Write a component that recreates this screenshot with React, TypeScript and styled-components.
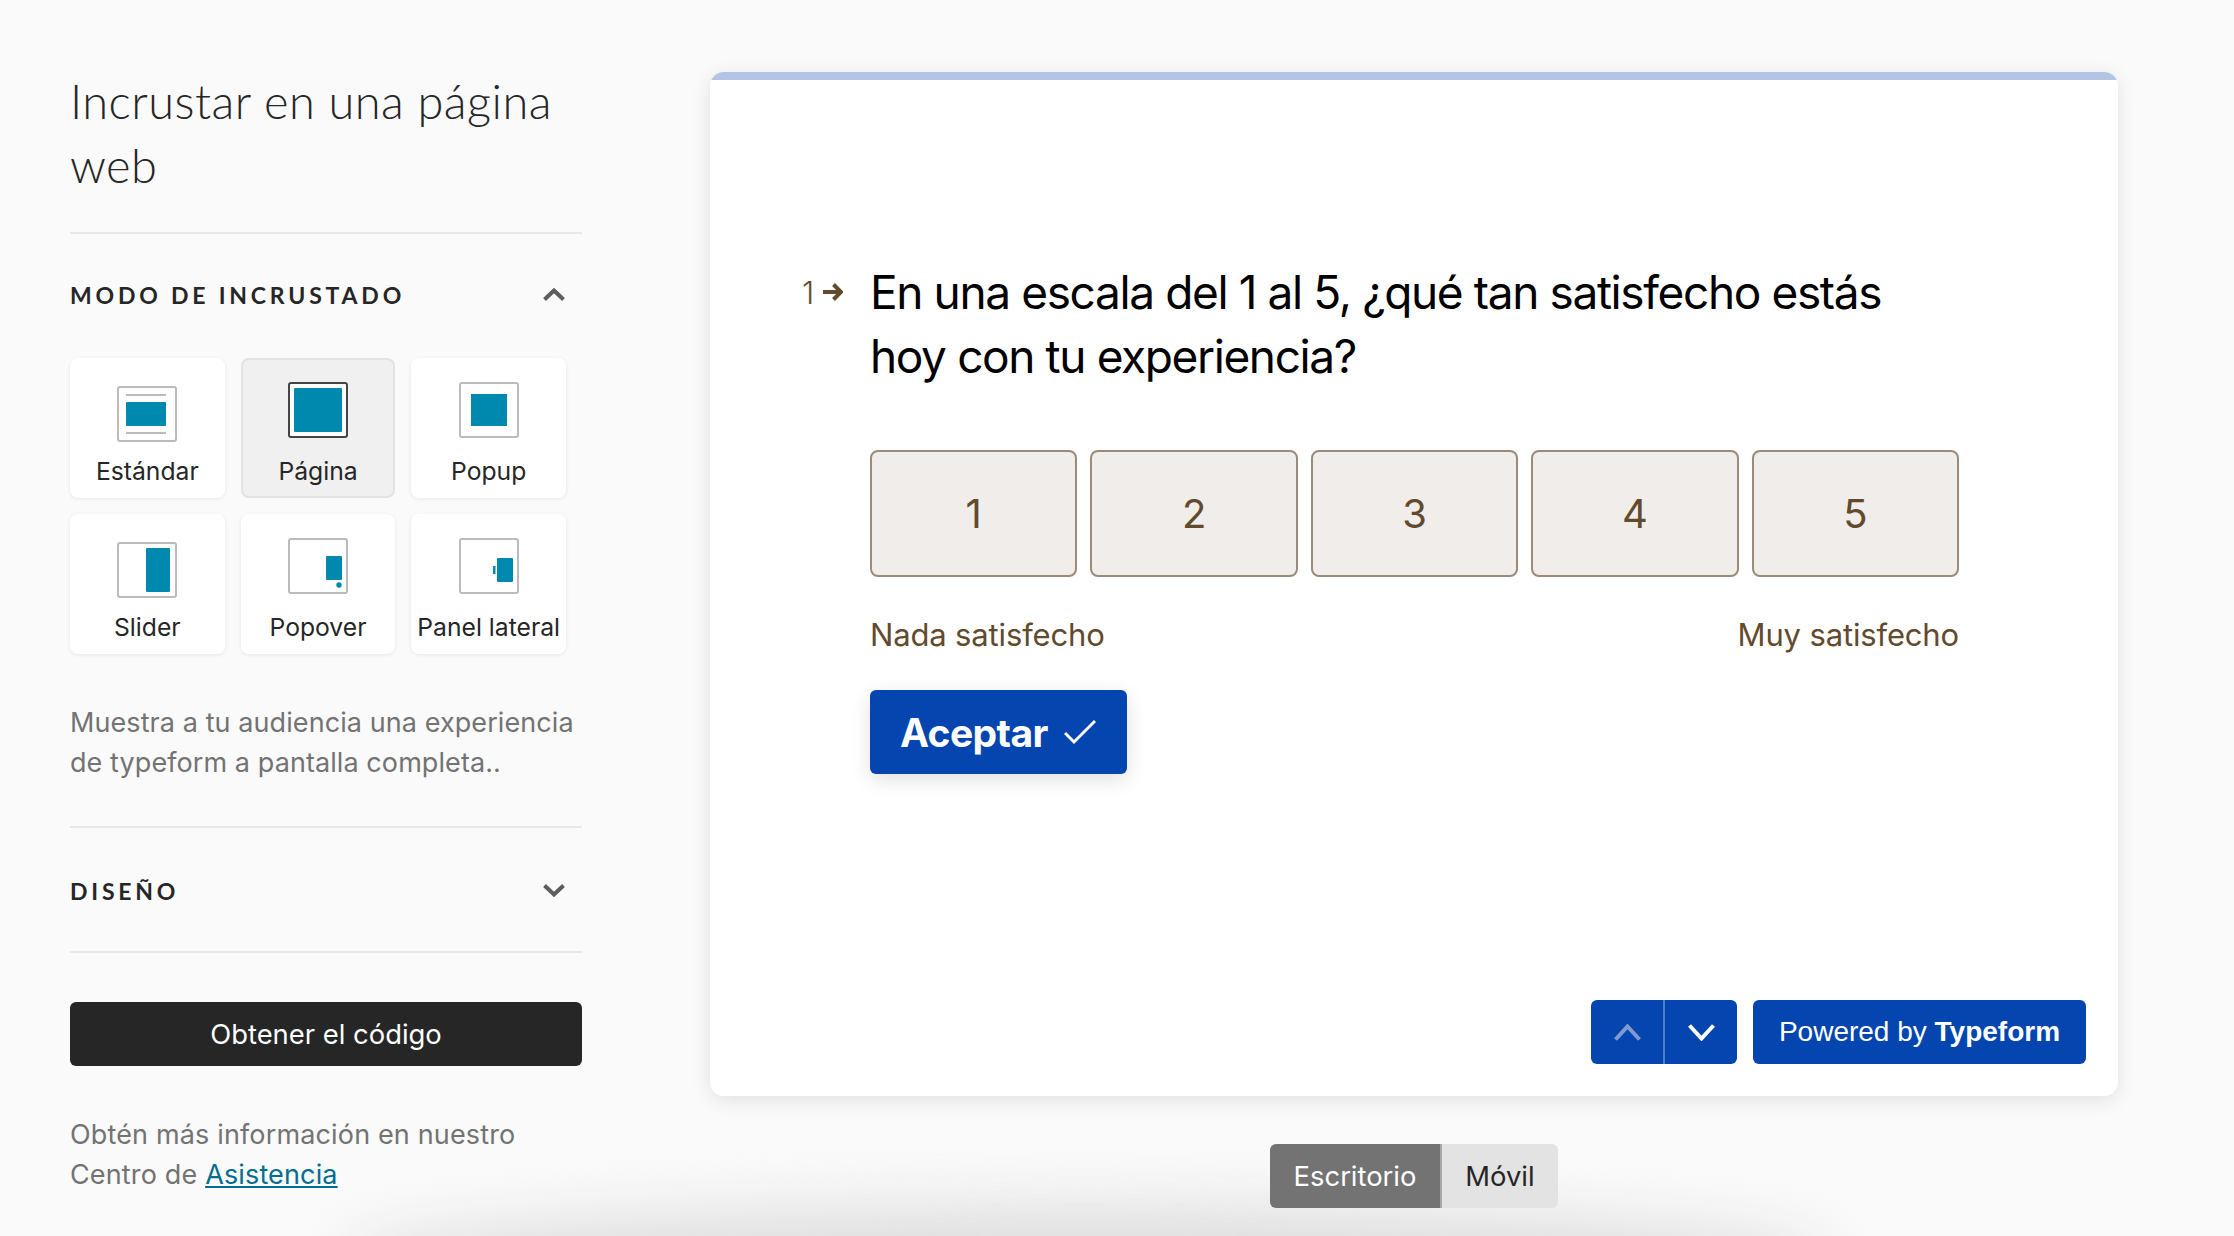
import React from 'react';
import styled, { createGlobalStyle } from 'styled-components';

const GlobalStyle = createGlobalStyle`
  html, body {
    margin: 0;
    padding: 0;
    background: #fafafa;
  }
  * {
    box-sizing: border-box;
  }
`;

const Page = styled.div`
  position: relative;
  width: 2234px;
  height: 1236px;
  overflow: hidden;
  display: flex;
  background: #fafafa;
  font-family: Inter, "Liberation Sans", sans-serif;
`;

const BottomGlow = styled.div`
  position: absolute;
  left: 340px;
  right: 400px;
  bottom: -80px;
  height: 110px;
  border-radius: 50%;
  background: #dedede;
  filter: blur(30px);
`;

const Sidebar = styled.aside`
  position: relative;
  width: 512px;
  margin-left: 70px;
  flex-shrink: 0;
`;

const Title = styled.h1`
  margin: 0;
  padding: 69px 0 35px;
  font-family: Lato, sans-serif;
  font-weight: 300;
  font-size: 47px;
  letter-spacing: 0.45px;
  line-height: 64px;
  color: #262627;
  border-bottom: 2px solid #e8e8e8;
`;

const SectionHead = styled.div<{ $ruled?: boolean }>`
  height: ${(p) => (p.$ruled ? '125px' : '124px')};
  display: flex;
  align-items: center;
  justify-content: space-between;
  padding: ${(p) => (p.$ruled ? '2px 17px 0 0' : '0 17px 3px 0')};
  border-bottom: ${(p) => (p.$ruled ? '2px solid #e8e8e8' : 'none')};
`;

const SectionTitle = styled.span`
  font-family: Lato, sans-serif;
  font-weight: 700;
  font-size: 23px;
  letter-spacing: 3.8px;
  color: #262627;
`;

const ModeGrid = styled.div`
  display: grid;
  width: 496px;
  grid-template-columns: repeat(3, 1fr);
  grid-auto-rows: 140px;
  gap: 16px;
`;

const ModeCard = styled.div<{ $active?: boolean }>`
  display: grid;
  grid-template-rows: 99px 1fr;
  justify-items: center;
  border-radius: 8px;
  background: ${(p) => (p.$active ? '#f0f0f0' : '#fff')};
  box-shadow: ${(p) => (p.$active ? 'inset 0 0 0 2px #e3e3e3' : '0 1px 4px rgba(0, 0, 0, 0.08)')};
`;

const ModeIcon = styled.svg<{ $top: number }>`
  width: 60px;
  height: 56px;
  margin-top: ${(p) => p.$top}px;
`;

const ModeLabel = styled.span`
  font-size: 24.7px;
  line-height: 28px;
  color: #262627;
  white-space: nowrap;
`;

const Description = styled.p`
  margin: 49px 0 0;
  padding-bottom: 43px;
  font-size: 27px;
  letter-spacing: 0.08px;
  line-height: 40px;
  color: #737373;
  border-bottom: 2px solid #e8e8e8;
`;

const CodeButton = styled.button`
  display: block;
  width: 512px;
  height: 64px;
  margin-top: 49px;
  border: none;
  border-radius: 6px;
  background: #262627;
  color: #fff;
  font-family: Inter, sans-serif;
  font-size: 27.4px;
`;

const HelpText = styled.p`
  margin: 49px 0 0;
  font-size: 27px;
  letter-spacing: 0.15px;
  line-height: 40px;
  color: #737373;
`;

const HelpLink = styled.a`
  color: #006e8f;
  text-decoration: underline;
`;

const Preview = styled.main`
  position: relative;
  width: 1408px;
  margin-left: 128px;
  padding-top: 72px;
  flex-shrink: 0;
`;

const FormCard = styled.div`
  height: 1024px;
  display: flex;
  flex-direction: column;
  background: linear-gradient(#b3c4e5 8px, #fff 8px);
  border-radius: 14px;
  box-shadow: 0 4px 20px rgba(0, 0, 0, 0.1);
  padding: 188px 32px 32px 92px;
`;

const QuestionRow = styled.div`
  display: flex;
  align-items: flex-start;
`;

const QuestionIndex = styled.div`
  width: 68px;
  height: 64px;
  display: flex;
  align-items: center;
  gap: 9px;
  font-size: 31px;
  font-weight: 300;
  color: #624a2e;
`;

const QuestionText = styled.h2`
  margin: 0;
  width: 1060px;
  font-size: 46px;
  letter-spacing: -1.38px;
  line-height: 64px;
  font-weight: 400;
  color: #000;
`;

const Answers = styled.div`
  width: 1089px;
  margin-left: 68px;
`;

const ScaleRow = styled.div`
  display: grid;
  grid-template-columns: repeat(5, 1fr);
  gap: 13px;
  margin-top: 62px;
`;

const ScaleButton = styled.button`
  height: 127px;
  border: 2px solid #9c8b78;
  border-radius: 8px;
  background: #f0edea;
  color: #624a2e;
  font-family: Inter, sans-serif;
  font-size: 40px;
`;

const ScaleLabels = styled.div`
  display: flex;
  justify-content: space-between;
  margin-top: 38px;
  font-size: 31px;
  letter-spacing: -0.15px;
  line-height: 40px;
  color: #624a2e;
`;

const AcceptButton = styled.button`
  display: flex;
  align-items: center;
  gap: 16px;
  height: 84px;
  width: 257px;
  margin-top: 35px;
  padding: 0 0 0 30px;
  border: none;
  border-radius: 6px;
  background: #0445af;
  color: #fff;
  font-family: Inter, sans-serif;
  font-size: 39px;
  letter-spacing: -0.6px;
  font-weight: 700;
  box-shadow: 0 6px 20px rgba(0, 0, 0, 0.12);
`;

const FormFooter = styled.div`
  margin-top: auto;
  display: flex;
  justify-content: flex-end;
  gap: 16px;
`;

const NavGroup = styled.div`
  display: flex;
  width: 146px;
  height: 64px;
  border-radius: 6px;
  overflow: hidden;
  background: #0445af;
`;

const NavButton = styled.div<{ $divided?: boolean }>`
  flex: 1;
  display: flex;
  align-items: center;
  justify-content: center;
  border-right: ${(p) => (p.$divided ? '2px solid rgba(255, 255, 255, 0.3)' : 'none')};
`;

const PoweredBy = styled.div`
  height: 64px;
  width: 333px;
  display: flex;
  align-items: center;
  justify-content: center;
  border-radius: 6px;
  background: #0445af;
  color: #fff;
  font-family: "Liberation Sans", sans-serif;
  font-size: 28px;

  b {
    font-weight: 700;
  }
`;

const DeviceSwitch = styled.div`
  display: flex;
  width: 288px;
  height: 64px;
  margin: 48px auto 0;
  border-radius: 6px;
  overflow: hidden;
  font-size: 27.4px;
`;

const DeviceOption = styled.div<{ $active?: boolean }>`
  display: flex;
  align-items: center;
  justify-content: center;
  width: ${(p) => (p.$active ? '172px' : '116px')};
  background: ${(p) => (p.$active ? '#737373' : '#e3e3e3')};
  border-right: ${(p) => (p.$active ? '2px solid #a8a8a8' : 'none')};
  color: ${(p) => (p.$active ? '#fff' : '#262627')};
`;

const modes = [
  {
    label: 'Estándar',
    top: 28,
    art: (
      <>
        <rect x="9" y="8" width="40" height="2" fill="#bbb" />
        <rect x="9" y="16" width="40" height="24" rx="1" fill="#0089af" />
        <rect x="9" y="46" width="40" height="2" fill="#bbb" />
      </>
    ),
  },
  {
    label: 'Página',
    top: 24,
    active: true,
    art: <rect x="6" y="6" width="48" height="44" rx="1" fill="#0089af" />,
  },
  { label: 'Popup', top: 24, art: <rect x="12" y="12" width="36" height="32" fill="#0089af" /> },
  { label: 'Slider', top: 28, art: <rect x="29" y="6" width="24" height="44" rx="1" fill="#0089af" /> },
  {
    label: 'Popover',
    top: 24,
    art: (
      <>
        <rect x="38" y="18" width="16" height="24" rx="1" fill="#0089af" />
        <circle cx="51" cy="47" r="2.7" fill="#0089af" />
      </>
    ),
  },
  {
    label: 'Panel lateral',
    top: 24,
    art: (
      <>
        <rect x="38" y="20" width="16" height="24" rx="1" fill="#0089af" />
        <rect x="34" y="28" width="2.5" height="8" fill="#0089af" />
      </>
    ),
  },
];

const Chevron = ({ up, color, w = 22, h = 13, sw = 4 }: { up?: boolean; color: string; w?: number; h?: number; sw?: number }) => (
  <svg width={w} height={h} viewBox={`0 0 ${w} ${h}`} fill="none">
    <path
      d={up ? `M1.5 ${h - 1.5}L${w / 2} 2.5L${w - 1.5} ${h - 1.5}` : `M1.5 1.5L${w / 2} ${h - 2.5}L${w - 1.5} 1.5`}
      stroke={color}
      strokeWidth={sw}
    />
  </svg>
);

const App: React.FC = () => (
  <Page>
    <GlobalStyle />
    <BottomGlow />
    <Sidebar>
      <Title>Incrustar en una página web</Title>
      <SectionHead>
        <SectionTitle>MODO DE INCRUSTADO</SectionTitle>
        <Chevron up color="#5e5e5e" />
      </SectionHead>
      <ModeGrid>
        {modes.map((m) => (
          <ModeCard key={m.label} $active={m.active}>
            <ModeIcon $top={m.top} viewBox="0 0 60 56">
              <rect
                x="1"
                y="1"
                width="58"
                height="54"
                rx="2"
                fill="#fff"
                stroke={m.active ? '#444' : '#bbb'}
                strokeWidth="2"
              />
              {m.art}
            </ModeIcon>
            <ModeLabel>{m.label}</ModeLabel>
          </ModeCard>
        ))}
      </ModeGrid>
      <Description>
        Muestra a tu audiencia una experiencia de typeform a pantalla completa..
      </Description>
      <SectionHead $ruled>
        <SectionTitle>DISEÑO</SectionTitle>
        <Chevron color="#5e5e5e" />
      </SectionHead>
      <CodeButton>Obtener el código</CodeButton>
      <HelpText>
        Obtén más información en nuestro Centro de <HelpLink href="#">Asistencia</HelpLink>
      </HelpText>
    </Sidebar>
    <Preview>
      <FormCard>
        <QuestionRow>
          <QuestionIndex>
            1
            <svg width="20" height="18" viewBox="0 0 20 18" fill="none">
              <path d="M0 9H17M10.5 1.5L18 9L10.5 16.5" stroke="#624a2e" strokeWidth="4" />
            </svg>
          </QuestionIndex>
          <QuestionText>
            En una escala del 1 al 5, ¿qué tan satisfecho estás hoy con tu experiencia?
          </QuestionText>
        </QuestionRow>
        <Answers>
          <ScaleRow>
            {[1, 2, 3, 4, 5].map((n) => (
              <ScaleButton key={n}>{n}</ScaleButton>
            ))}
          </ScaleRow>
          <ScaleLabels>
            <span>Nada satisfecho</span>
            <span>Muy satisfecho</span>
          </ScaleLabels>
          <AcceptButton>
            Aceptar
            <svg width="32" height="26" viewBox="0 0 32 26" fill="none">
              <path d="M1 14L10 23L31 2" stroke="#fff" strokeWidth="3" />
            </svg>
          </AcceptButton>
        </Answers>
        <FormFooter>
          <NavGroup>
            <NavButton $divided>
              <Chevron up color="#8099ce" w={27} h={17} />
            </NavButton>
            <NavButton>
              <Chevron color="#fff" w={27} h={17} />
            </NavButton>
          </NavGroup>
          <PoweredBy>
            Powered by&nbsp;<b>Typeform</b>
          </PoweredBy>
        </FormFooter>
      </FormCard>
      <DeviceSwitch>
        <DeviceOption $active>Escritorio</DeviceOption>
        <DeviceOption>Móvil</DeviceOption>
      </DeviceSwitch>
    </Preview>
  </Page>
);

export default App;
